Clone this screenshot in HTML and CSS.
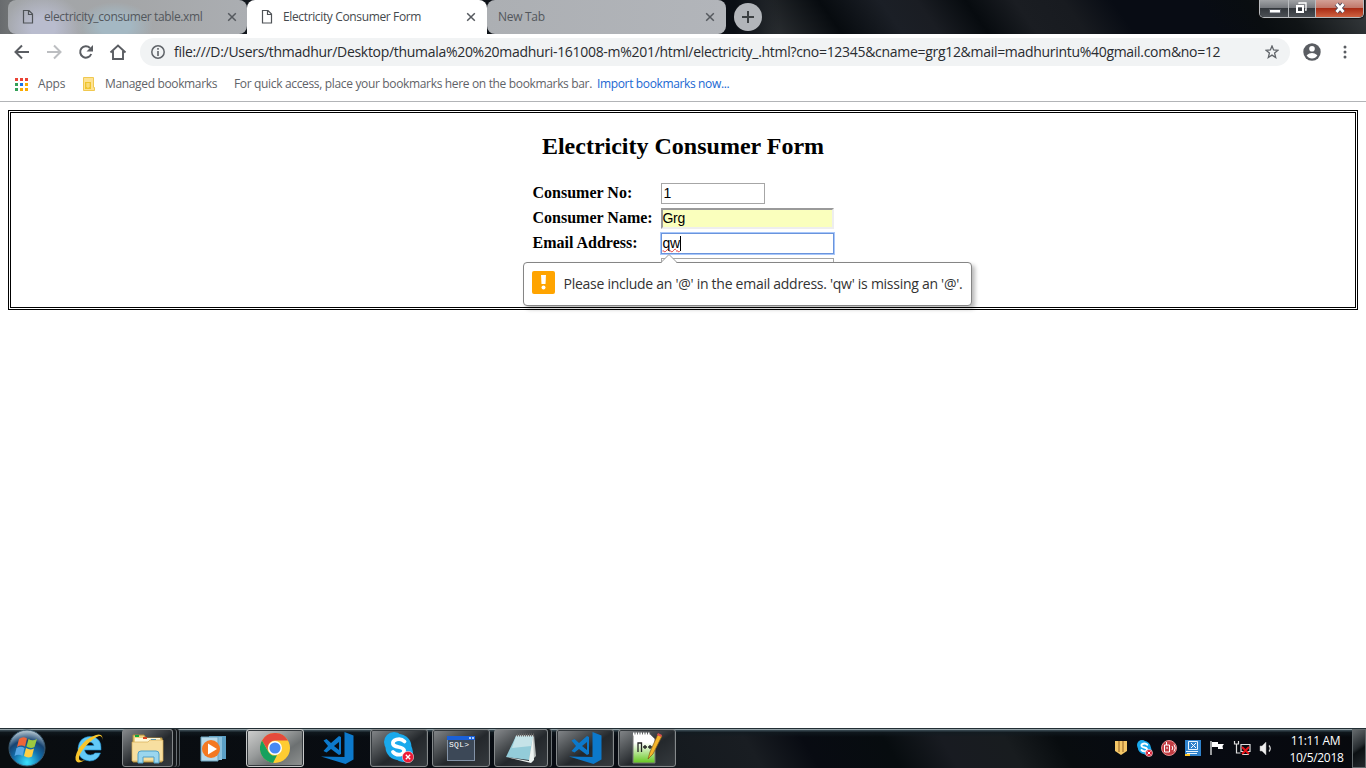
FILE: index.html
```html
<!DOCTYPE html>
<html lang="en">
<head>
<meta charset="utf-8">
<title>Electricity Consumer Form</title>
<link rel="stylesheet" href="styles.css">
</head>
<body>
<svg class="defs" width="0" height="0" aria-hidden="true">
  <defs>
    <symbol id="page" viewBox="0 0 12 16"><path d="M1.500 1.500h5.500l3.500 3.500v9h-9zM6.500 1.500v4h4" fill="none" stroke="#4f5357" stroke-width="1.200"/></symbol>
    <symbol id="close" viewBox="0 0 10 10"><path d="M1.200 1.200l7.600 7.600M8.800 1.200l-7.600 7.600" stroke="#55595e" stroke-width="1.500"/></symbol>
    <symbol id="vscode" viewBox="0 0 33 33"><path d="M23.500 0L32.500 3.500v24L24.500 32 0 24.500l23.500.500zM2.500 8.500l3-1.500 4.500 4 8-7 2 1v17l-2 1-8-6-4.500 3.500-3-1.500L7 14zM18 10l-5 4 5 4z" fill="#0c79cb" fill-rule="evenodd"/></symbol>
    <symbol id="skype" viewBox="0 0 30 32"><circle cx="10" cy="10" r="10" fill="#1aa9ec"/><circle cx="19" cy="20" r="10" fill="#1aa9ec"/><circle cx="14.500" cy="15" r="13" fill="#1aa9ec"/><path d="M20.500 9.500Q17 6 12.500 7.500q-4.500 1.500-3.500 4.500c1 4 10 2 11 6 1 5-7 6.500-11 2" fill="none" stroke="#fff" stroke-width="3.800" stroke-linecap="round"/></symbol>
  </defs>
</svg>

<header class="tabstrip">
  <div class="tab tab-first"><svg class="tab-page" width="12" height="16"><use href="#page"/></svg><span class="tab-title t-xml">electricity_consumer table.xml</span><svg class="tab-x" width="10" height="10"><use href="#close"/></svg></div>
  <div class="tab tab-active"><svg class="tab-page" width="12" height="16"><use href="#page"/></svg><span class="tab-title t-form">Electricity Consumer Form</span><svg class="tab-x" width="10" height="10"><use href="#close"/></svg></div>
  <div class="tab tab-new"><span class="tab-title t-new">New Tab</span><svg class="tab-x" width="10" height="10"><use href="#close"/></svg></div>
  <div class="plus"><svg width="12" height="12" viewBox="0 0 12 12"><path d="M6 0v12M0 6h12" stroke="#3c4043" stroke-width="2"/></svg></div>
  <div class="winbtns">
    <span class="wb wb-min"><svg width="12" height="12" viewBox="0 0 12 12"><path d="M.5 7.500h11v3.500h-11z" fill="#fff" stroke="#50545c"/></svg></span>
    <span class="wb wb-max"><svg width="12" height="12" viewBox="0 0 12 12"><path d="M4 2V1h7v7h-1" fill="none" stroke="#fff" stroke-width="1.300"/><path d="M2 4h6v6H2z" fill="none" stroke="#fff" stroke-width="2"/><path d="M4 6h2v2H4z" fill="#33363b"/></svg></span>
    <span class="wb wb-close"><svg width="14" height="12" viewBox="0 0 14 12"><path d="M3.500 2l7 8M10.500 2l-7 8" stroke="#514b5c" stroke-width="4.600"/><path d="M3.500 2l7 8M10.500 2l-7 8" stroke="#fff" stroke-width="2.700"/></svg></span>
  </div>
</header>

<nav class="toolbar">
  <svg class="nav-icons" width="140" height="36" viewBox="0 34 140 36" fill="none" stroke="#5a5d62" stroke-width="2">
    <path d="M29 52H16M22 45.500L15.500 52l6.500 6.500"/>
    <path d="M47 52h13M54 45.500l6.500 6.500-6.500 6.500" stroke="#bcbec1"/>
    <path d="M91.200 54a5.700 5.700 0 1 1-1.200-6"/><path d="M93 45v6.500h-6.500z" fill="#5a5d62" stroke="none"/>
    <path d="M110.500 52.500l7.500-7 7.500 7M113 51v8h10v-8" stroke-width="1.900"/>
  </svg>
  <div class="omnibox">
    <svg width="14" height="14" viewBox="0 0 14 14"><circle cx="7" cy="7" r="6.200" fill="none" stroke="#5f6368" stroke-width="1.500"/><path d="M7 6v5M7 3v1.700" stroke="#5f6368" stroke-width="1.600"/></svg>
    <span class="url">file:///D:/Users/thmadhur/Desktop/thumala%20%20madhuri-161008-m%201/html/electricity_.html?cno=12345&amp;cname=grg12&amp;mail=madhurintu%40gmail.com&amp;no=12</span>
    <svg class="star" width="14" height="14" viewBox="0 0 14 14"><path d="M7 1l1.600 4 4.400.3-3.400 2.800 1.100 4.400L7 10.100l-3.700 2.400 1.100-4.400L1 5.300 5.400 5z" fill="none" stroke="#5f6368" stroke-width="1.300"/></svg>
  </div>
  <svg class="user" width="18" height="18" viewBox="0 0 18 18"><circle cx="9" cy="9" r="8.700" fill="#5a5d62"/><circle cx="9" cy="5.800" r="2.800" fill="#fff"/><path d="M3.600 12.200q5.400-4.500 10.800 0-2 3.300-5.400 3.300t-5.400-3.300z" fill="#fff"/></svg>
  <svg class="menu" width="4" height="14" viewBox="0 0 4 14" fill="#5a5d62"><circle cx="2" cy="2" r="1.500"/><circle cx="2" cy="7" r="1.500"/><circle cx="2" cy="12" r="1.500"/></svg>
</nav>

<nav class="bookmarks">
  <svg width="13" height="13" viewBox="0 0 13 13"><path d="M0 0h3v3H0zM5 0h3v3H5zM10 0h3v3h-3z" fill="#ea4335"/><path d="M0 5h3v3H0zM0 10h3v3H0z" fill="#34a058"/><path d="M5 5h3v3H5z" fill="#1a73e8"/><path d="M10 5h3v3h-3zM5 10h3v3H5zM10 10h3v3h-3z" fill="#fbab00"/></svg>
  <span class="b-apps">Apps</span>
  <svg class="b-folder" width="12" height="14" viewBox="0 0 12 14"><path d="M.5.500h10v10h1v3H.5z" fill="#fde293" stroke="#f0c850"/><path d="M2 5h6v7H2z" fill="#efc42c"/><path d="M3 7h4M3 9h4M5 6v5M9.500 10v3" stroke="#fde293"/></svg>
  <span class="b-managed">Managed bookmarks</span>
  <span class="b-quick">For quick access, place your bookmarks here on the bookmarks bar.</span>
  <a class="b-import">Import bookmarks now...</a>
</nav>

<main class="page">
  <section class="formbox">
    <h2><span>Electricity Consumer Form</span></h2>
    <form class="fields">
      <label class="l1">Consumer No:</label><div class="inp inp-no">1</div>
      <label class="l2">Consumer Name:</label><div class="inp inp-name">Grg</div>
      <label class="l3">Email Address:</label><div class="inp inp-mail"><span class="typo">qw</span><i class="caret"></i>
        <div class="bubble">
          <svg class="arrow" width="18" height="10" viewBox="0 0 18 10"><path d="M1 9.500l8-8 8 8" fill="#fff" stroke="#999"/><path d="M2 9.500h14" stroke="#fff"/></svg>
          <span class="warn"><svg width="23" height="23" viewBox="0 0 23 23"><path d="M9 4h5l-.5 9h-4z" fill="#fff"/><circle cx="11.500" cy="16.500" r="2" fill="#fff"/></svg></span>
          <span class="msg">Please include an '@' in the email address. 'qw' is missing an '@'.</span>
        </div>
      </div>
      <label></label><div class="inp inp-last"></div>
    </form>
  </section>
</main>

<footer class="taskbar">
  <div class="start"><svg width="38" height="38" viewBox="0 0 38 38"><defs><radialGradient id="orb" cx=".5" cy=".9" r=".85"><stop offset="0" stop-color="#3be3ff"/><stop offset=".45" stop-color="#126eaa"/><stop offset=".72" stop-color="#164371"/><stop offset="1" stop-color="#a7bbc8"/></radialGradient></defs><circle cx="19" cy="19" r="18" fill="url(#orb)" stroke="#39596e"/><path d="M11 10q4-3 8-.5l-2 8q-4-2-8 .5z" fill="#ed6639"/><path d="M20.500 10q4 2.500 8.500 0l-2.500 8q-4 2-8-.5z" fill="#9bc940"/><path d="M8.500 19q4-2.500 8 0l-2 8q-4-2.500-8 0z" fill="#57a7e4"/><path d="M18 19q4 2.500 8 .5l-2 8q-4 2-8-.5z" fill="#ffcf42"/></svg></div>
  <div class="task"><svg width="32" height="32" viewBox="0 0 32 32"><path d="M28 18H11.500q1 5 6 5 3 0 4.500-2h5.500Q24.500 29 16.500 29 5 28 5 16.500 6 5 17 4.500 29 5 28 18zM11.500 13.500H21q-1-3.500-4.500-3.500t-5 3.500z" fill="#62c9f6" stroke="#1c8fce" stroke-width=".6" fill-rule="evenodd"/><path d="M29 9q2-8-6-6Q13 6 6 16 0 27 4 30q3 1.500 8-2-6 2-6-2 0-4 6-11Q20 6 26 4q4-.5 3 5z" fill="#f9c62b"/></svg></div>
  <div class="task open pair"><svg width="34" height="32" viewBox="0 0 34 32"><path d="M2 3h11l2 3h16v24H2z" fill="#f1d380" stroke="#ac8a3c"/><path d="M4 6h25v5H4z" fill="#fff7d7"/><path d="M4 3h4v2H4z" fill="#13a83a"/><path d="M12 5h4v2h-4z" fill="#d84522"/><path d="M20 7h5v2h-5z" fill="#248fe0"/><path d="M1 10h16l2-2h13v21H1z" fill="#f7dfa0" stroke="#d6ac55" stroke-width=".7"/><path d="M7 31v-9q0-3 3-3h15q3 0 3 3v9h-5v-6H12v6z" fill="#9bd6ee" stroke="#4e9fc8"/></svg></div>
  <div class="task"><svg width="27" height="27" viewBox="0 0 27 27"><path d="M9 1h17v23H9z" fill="#5b9fc5"/><path d="M5 2h17v23H5z" fill="#8ac0dd"/><path d="M1 2h17v24H1z" fill="#b7d9ea" stroke="#6aa4c0"/><circle cx="11" cy="14" r="9" fill="#f47821"/><path d="M8 8.500l9 5.500-9 5.500z" fill="#fff"/></svg></div>
  <div class="task open bright"><svg width="30" height="30" viewBox="0 0 30 30"><circle cx="15" cy="15" r="15" fill="#ffcc32"/><path d="M2 7.500A15 15 0 0 1 28 7.500H15a7.500 7.500 0 0 0-6.500 11z" fill="#e44a3c"/><path d="M2 7.500L8.500 19A7.500 7.500 0 0 0 17 22.200L13 30A15 15 0 0 1 2 7.500z" fill="#16a15e"/><circle cx="15" cy="15" r="7" fill="#fff"/><circle cx="15" cy="15" r="5.600" fill="#4789f4"/></svg></div>
  <div class="task"><svg width="33" height="33"><use href="#vscode"/></svg></div>
  <div class="task open"><svg width="30" height="32"><use href="#skype"/></svg><svg class="badge" width="12" height="12" viewBox="0 0 12 12"><circle cx="6" cy="6" r="5.700" fill="#ed1935" stroke="#fff" stroke-width=".5"/><path d="M3.800 3.800l4.400 4.400M8.200 3.800l-4.400 4.400" stroke="#fff" stroke-width="1.300"/></svg></div>
  <div class="task open"><svg width="28" height="25" viewBox="0 0 28 25"><path d="M0 0h28v25H0z" fill="#8393a7"/><path d="M0 0h28v4H0z" fill="#1a60d8"/><path d="M22 1h2v2h-2zM25 1h2v2h-2z" fill="#a9cdff"/><path d="M1 4h26v20H1z" fill="#3c4857"/><text x="2" y="11" class="sql" textLength="20">SQL&gt;</text></svg></div>
  <div class="task open pair note"><svg width="30" height="31" viewBox="0 0 30 31"><path d="M10 2h18l2 21-6 6z" fill="#b8bdbc"/><path d="M10 3h17l-4 24L0 24z" fill="#93ccd9"/><path d="M10 3h17l-2 10-19 2z" fill="#c5e3e8"/><path d="M0 24l23 4 4-25 1 24-3 3z" fill="#edf3f1"/><path d="M11 2h18" stroke="#666" stroke-width="3" stroke-dasharray="1 1"/></svg></div>
  <div class="task open"><svg width="33" height="33"><use href="#vscode"/></svg></div>
  <div class="task open"><svg width="32" height="32" viewBox="0 0 32 32"><defs><linearGradient id="npp" x2="0" y2="1"><stop offset=".3" stop-color="#fff"/><stop offset="1" stop-color="#64c71d"/></linearGradient></defs><path d="M2 2h17l5 5v24H2z" fill="url(#npp)" stroke="#777"/><path d="M2 2h17" stroke="#fff" stroke-width="3" stroke-dasharray="1.500 1"/><path d="M7 20v-9h3.500v9M12 15h4M14 13v4M17 15h4M19 13v4" fill="none" stroke="#222" stroke-width="1.300"/><path d="M17 27l2-7L27 2l4 2-9 18z" fill="#f4b52c" stroke="#80571a" stroke-width=".7"/><path d="M26 3l1-2 4 2-1 2z" fill="#d64d51"/></svg></div>
  <div class="tray">
    <svg width="170" height="20" viewBox="0 0 170 20">
      <path d="M2 3h12v10l-6 4-6-4z" fill="#f4c767"/><path d="M6 3v11M10 3v11" stroke="#946024"/>
      <svg x="24" y="2" width="15" height="16"><use href="#skype"/></svg><circle cx="36" cy="15" r="3.500" fill="#d91d33" stroke="#fff" stroke-width=".6"/><path d="M34.500 13.500l3 3M37.500 13.500l-3 3" stroke="#fff"/>
      <circle cx="56" cy="10" r="7.500" fill="#c43d43" stroke="#e48d8e"/><path d="M51.500 7h5v7h-5zM53.500 4v3M54 9v2M59 8q1.500 2 0 4M61 6.500q2.500 3.500 0 7" fill="none" stroke="#fff" stroke-width="1"/>
      <path d="M72 2h16v16H72z" fill="#2f82cc"/><path d="M75.500 3.500h9v8h-9zM73 13.500h12M74 15.500h10" fill="none" stroke="#e7f5ff"/><path d="M78 5l5 5M83 5l-5 5" stroke="#fff"/><path d="M72 17h5" stroke="#ffc72b" stroke-width="2"/>
      <path d="M98 3v14" stroke="#fff" stroke-width="1.200"/><path d="M99 4h6v2h6l-1.500 2 .5 3h-5v-2h-6z" fill="#fff"/>
      <path d="M121.500 3v3h4V3M123.500 6v9h4M128 6.500h9v7h-9zM129 16.500h7" fill="none" stroke="#dedede" stroke-width="1.200"/><path d="M129 9l7 7M136 9l-7 7" stroke="#e71419" stroke-width="2"/>
      <path d="M147 8h2l4-4v13l-4-4h-2z" fill="#eee" stroke="#aaa" stroke-width=".5"/><path d="M156 7.500q2.500 3 0 6" fill="none" stroke="#ddd" stroke-width="1.200"/>
    </svg>
  </div>
  <div class="clock"><span class="time">11:11 AM</span><span class="date">10/5/2018</span></div>
  <div class="showdesk"></div>
</footer>
</body>
</html>
```
FILE: styles.css
```css
* { box-sizing: border-box; }
html, body { margin: 0; height: 100%; overflow: hidden; }
body { display: flex; flex-direction: column; background: #fff; font-family: "Open Sans", "Noto Sans", sans-serif; font-size: 12px; color: #5f6368; }
svg { display: block; flex: none; }
.defs { position: absolute; }
span, a, label { white-space: nowrap; }

.tabstrip { flex: none; height: 34px; display: flex; padding-left: 8px; background: linear-gradient(90deg, #686b6e 0, #6f7274 8px, #151a20 60px, #0a0e14 735px, #1b1f24 760px, transparent 780px), linear-gradient(55deg, transparent 300px, #070b0f 690px, #1b1f26 740px, #1a1d23 770px, #070b0f 810px, #1a1d22 850px, #181b20 890px, #080c14 930px, #080c14 1000px, #090d10 1040px, #101416 1070px, #34383b 1130px, #43484b 1200px); }
.tab { width: 239px; height: 34px; display: flex; align-items: center; padding: 0 11px 0 14px; border-radius: 8px; background: linear-gradient(90deg, #acafb3, #b2b5ba); }
.tab-first { background: radial-gradient(ellipse 38px 24px at 107px 26px, #a4b8c3 40%, transparent), radial-gradient(ellipse 40px 34px at 35px 28px, #b9bcce 30%, transparent), linear-gradient(90deg, #a2a5a8, #a4a6a8 50%, #abaeb2); padding-right: 10px; }
.tab-active { width: 240px; background: #fff; border-radius: 8px 8px 0 0; }
.tab-new { padding-left: 11px; }
.tab-title { flex: 1; color: #53575c; line-height: 16px; }
.t-xml { letter-spacing: -.38px; }
.t-form { letter-spacing: -.36px; }
.t-new { letter-spacing: -.3px; }
.tab-page { margin-right: 10px; }
.tab-active .tab-title { color: #45494d; }
.plus { width: 28px; height: 28px; margin: 3px 0 0 8px; border-radius: 50%; background: #b2b5ba; display: grid; place-items: center; }
.winbtns { width: 105px; height: 18px; margin: 0 2px 0 auto; display: flex; border: 1px solid #b9bcbf; border-top: 0; border-radius: 0 0 5px 5px; overflow: hidden; box-shadow: 0 0 1px 1px #111; }
.wb { display: grid; place-items: center; padding-bottom: 2px; background: linear-gradient(#a0a2a5 0, #777a7f 45%, #33373c 50%, #4c5055); border-right: 1px solid #b9bcbf; }
.wb-min { width: 29px; padding-left: 1px; }
.wb-max { width: 27px; padding-right: 2px; }
.wb-close { flex: 1; border: 0; background: linear-gradient(#d3a095 0, #c1796b 45%, #a92c15 50%, #cf6241); }

.toolbar { flex: none; height: 36px; display: flex; align-items: center; }
.omnibox { width: 1150px; height: 28px; border-radius: 14px; background: #f1f3f4; display: flex; align-items: center; padding: 0 11px; }
.url { margin-left: 9px; font-size: 14px; line-height: 20px; color: #292c30; letter-spacing: -.3px; }
.star { margin-left: auto; }
.user { margin-left: 13px; }
.menu { margin-left: 22px; }

.bookmarks { flex: none; height: 32px; display: flex; align-items: center; padding: 0 0 3px 15px; border-bottom: 1px solid #b2b4b7; }
.bookmarks span, .bookmarks a { line-height: 16px; padding-bottom: 1px; }
.b-apps { margin-left: 10px; width: 45px; letter-spacing: -.2px; }
.b-managed { margin-left: 10px; width: 129px; letter-spacing: -.35px; }
.b-quick { width: 363px; letter-spacing: -.34px; }
.b-import { color: #1967d2; letter-spacing: -.36px; }

.page { flex: 1; padding: 8px; color: #000; }
.formbox { height: 200px; border: 3px double #000; font-family: "Liberation Serif", serif; font-weight: bold; }
h2 { margin: 20px 0 24px; font-size: 24px; line-height: 27px; text-align: center; }
.fields { width: 301px; margin: -1px auto 0; display: grid; grid-template-columns: 120px auto; grid-auto-rows: 21px; column-gap: 8px; row-gap: 4px; font-size: 16px; line-height: 20px; }
.inp { position: relative; width: 173px; height: 21px; padding: 0 2px; border: 1px solid #a6a6a6; font: 14px/18px "Liberation Sans", sans-serif; letter-spacing: -.3px; color: #000; background: #fff; }
.inp-no { width: 104px; }
.inp-name { padding: 0; line-height: 16px; background: #faffbd; border: 2px inset #eee; }
.inp-mail { display: flex; align-items: center; padding-left: 1px; border-color: #6a94dc; box-shadow: 0 0 0 1px #a8c7fa; }
.typo { line-height: 15px; text-decoration: underline wavy #e23b3b 1px; text-underline-offset: 0; text-decoration-skip-ink: none; }
.caret { width: 1px; height: 15px; background: #000; }
.bubble { position: absolute; z-index: 2; left: -139px; top: 28px; width: 449px; height: 44px; border: 1px solid #858585; border-radius: 4px; background: #fff; box-shadow: 3px 3px 4px rgba(0,0,0,.28); display: flex; align-items: flex-start; padding: 8px; }
.arrow { position: absolute; left: 136px; top: -10px; }
.warn { width: 23px; height: 23px; border-radius: 2px; background: #ffa400; }
.msg { margin: 3px 0 0 9px; font: 14px/20px "Open Sans", "Noto Sans", sans-serif; letter-spacing: -.27px; color: #333; }

.taskbar { flex: none; height: 40px; display: flex; background: linear-gradient(#222e34 0 1px, #92a0a5 1px 2px, #34434b 2px 3px, rgba(17,27,33,.8) 4px, transparent 9px), linear-gradient(60deg, #090d10 0, #080c13 550px, #151a1f 590px, #191d22 660px, #080b12 710px, #070c0f 780px, #181b21 830px, #181c1f 885px, #080c0f 930px, #070a12 1020px, #07090d); }
.start { width: 60px; padding: 1px 0 0 8px; }
.task { position: relative; width: 58px; height: 38px; margin: 1px 4px 0 0; display: grid; place-items: center; border-radius: 3px; }
.open { border: 1px solid #85898b; background: linear-gradient(145deg, #85888b 0, #4c5053 32%, #24282c 55%, #353a3e); box-shadow: inset 0 0 0 1px #353a3e; }
.bright { background: linear-gradient(145deg, #d0d0cf, #999c9c 40%, #6c7071 65%, #909392); border-color: #c7c9c9; }
.pair { width: 51px; margin-right: 11px; box-shadow: 3px 0 #15191c, 4px 0 #6b7175, 6px 0 #101416, 7px 0 #51595e; }
.note { width: 54px; margin-right: 8px; box-shadow: 3px 0 #15191c, 4px 0 #6b7175; }
.badge { position: absolute; right: 13px; bottom: 3px; }
.sql { font: 8px "Liberation Mono", monospace; fill: #fff; }
.tray { margin-left: auto; width: 170px; padding-top: 10px; }
.clock { width: 67px; margin-right: 2px; padding-top: 4px; display: flex; flex-direction: column; align-items: center; color: #fff; line-height: 17px; }
.time { letter-spacing: -.3px; margin-left: -2px; }
.date { letter-spacing: -.3px; }
.showdesk { width: 14px; height: 39px; margin-top: 1px; border: 1px solid #62696c; background: linear-gradient(145deg, #64696c, #282d31 45%, #0c1013 55%, #24292d); }
```
